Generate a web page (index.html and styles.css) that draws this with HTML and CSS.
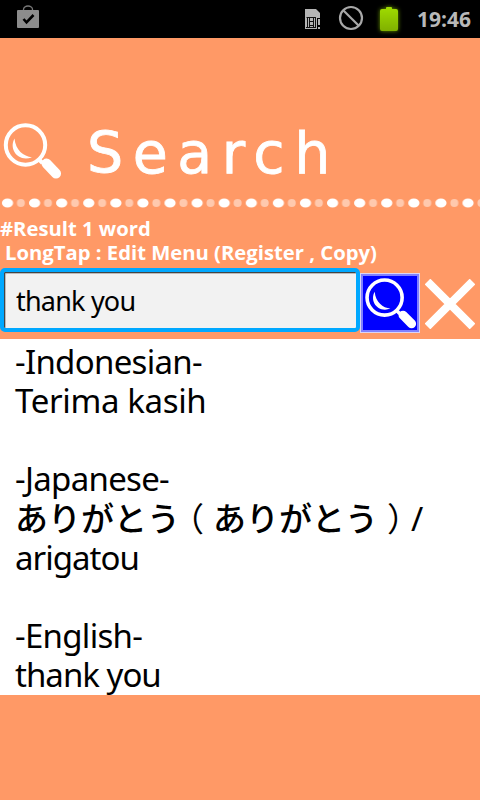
FILE: index.html
```html
<!DOCTYPE html>
<html lang="en">
<head>
  <meta charset="UTF-8">
  <meta name="viewport" content="width=device-width, initial-scale=1.0">
  <title>Search</title>
  <link rel="stylesheet" href="styles.css">
</head>
<body>
  <div class="status-bar">
    <svg class="icon-bag" width="22" height="24" viewBox="0 0 22 24">
      <path d="M6.5 6V4.500a4.500 3.500 0 0 1 9 0V6" fill="none" stroke="#777" stroke-width="1.300"/>
      <rect y="5" width="22" height="18" rx="1" fill="#8c8c8c"/>
      <path d="M6.500 14l3 3.300 7-7.300" fill="none" stroke="#000" stroke-width="2.600"/>
    </svg>
    <svg class="icon-sim" width="16" height="21" viewBox="0 0 16 21">
      <path d="M0 0h11l4 4v5h-3v11H0z" fill="#b4b4b4"/>
      <path d="M1.500 8.500h9.500M2.500 8v11M10.500 8v11M4.500 8v11M8.500 8v11M4.500 12.500h4M4.500 16.500h4M1 18.500h10" fill="none" stroke="#111" stroke-width="1"/>
      <path d="M13 10h2v6h-2zM13 18h2v2h-2z" fill="#b4b4b4"/>
    </svg>
    <svg class="icon-block" width="26" height="26" viewBox="0 0 26 26">
      <g fill="none" stroke="#a8a8a8" stroke-width="2.200">
        <circle cx="13" cy="13" r="11"/>
        <path d="M5.200 5.200l15.600 15.600"/>
      </g>
    </svg>
    <svg class="icon-battery" width="18" height="24" viewBox="0 0 18 24">
      <defs>
        <linearGradient id="charge" x1="0" y1="0" x2="0" y2="1">
          <stop offset="0" stop-color="#a0dc00"/>
          <stop offset="1" stop-color="#80b000"/>
        </linearGradient>
      </defs>
      <path d="M2 2h4V1q0-1 1-1h4q1 0 1 1v1h4q2 0 2 2v18q0 2-2 2H2q-2 0-2-2V4q0-2 2-2z" fill="url(#charge)"/>
    </svg>
    <span class="clock">19:46</span>
  </div>

  <header class="header">
    <div class="title-row">
      <svg class="title-glass" width="60" height="60" viewBox="0 0 60 60">
        <circle cx="23.500" cy="23" r="19.700" fill="none" stroke="#fff" stroke-width="4"/>
        <path d="M12.500 16.500C6.500 27 16 40.500 30 35.200C21.500 34.500 13.500 28 12.500 16.500z" fill="#fff"/>
        <path d="M36.500 37l4 4" stroke="#fff" stroke-width="4"/>
        <path d="M44.500 41.500L54 51.500" stroke="#fff" stroke-width="10" stroke-linecap="round"/>
      </svg>
      <h1 class="title">Search</h1>
    </div>
    <svg class="dots" width="480" height="12">
      <defs>
        <pattern id="bead" width="27.090" height="12" patternUnits="userSpaceOnUse">
          <ellipse cx="7.500" cy="6" rx="5.600" ry="4.600" fill="#fff"/>
          <circle cx="20.900" cy="6" r="4" fill="#ffc9ae"/>
        </pattern>
      </defs>
      <rect width="480" height="12" fill="url(#bead)"/>
    </svg>
  </header>

  <div class="info">
    <p class="info-count">#Result 1 word</p>
    <p class="info-hint">LongTap : Edit Menu (Register , Copy)</p>
  </div>

  <div class="search-row">
    <input class="search-input" type="text" value="thank you">
    <button class="search-btn">
      <svg width="54" height="54" viewBox="0 0 60 60">
        <circle cx="24" cy="24" r="19.500" fill="none" stroke="#fff" stroke-width="4"/>
        <path d="M13 17.500C7 28 16.500 41.500 30.500 36.200C22 35.500 14 29 13 17.500z" fill="#fff"/>
        <path d="M37 38l4 4" stroke="#fff" stroke-width="4"/>
        <path d="M44.500 43.500L54 53" stroke="#fff" stroke-width="10" stroke-linecap="round"/>
      </svg>
    </button>
    <button class="clear-btn">
      <svg width="50" height="50" viewBox="0 0 50 50">
        <path d="M2.500 2.500l45 45M47.500 2.500l-45 45" stroke="#fff" stroke-width="8"/>
      </svg>
    </button>
  </div>

  <div class="result">
    <div class="entry">
      <p class="lang tight">-Indonesian-</p>
      <p class="word loose">Terima kasih</p>
    </div>
    <div class="entry">
      <p class="lang tight">-Japanese-</p>
      <p class="word"><span class="kana">ありがとう<span class="paren-open">（</span>ありがとう<span class="paren-close">）</span></span>/</p>
      <p class="word tighter">arigatou</p>
    </div>
    <div class="entry">
      <p class="lang tight">-English-</p>
      <p class="word tighter">thank you</p>
    </div>
  </div>
</body>
</html>
```
FILE: styles.css
```css
* {
  box-sizing: border-box;
}

body {
  margin: 0;
  height: 800px;
  overflow: hidden;
  background: #ff9966;
  font-family: "Noto Sans", "Open Sans", "Noto Sans CJK JP", sans-serif;
}

p, h1 {
  margin: 0;
  white-space: nowrap;
}

svg {
  display: block;
  flex: none;
}

.status-bar {
  display: flex;
  align-items: flex-start;
  height: 38px;
  padding: 5px 9px 0 17px;
  background: #000;
}

.icon-sim {
  margin: 4px 17px 0 auto;
}

.icon-battery {
  margin: 2px 19px 0 16px;
  filter: drop-shadow(0 0 2px #6a9800);
}

.clock {
  color: #b8b8b8;
  font-family: "Open Sans", sans-serif;
  font-size: 21px;
  font-weight: bold;
  line-height: 29px;
}

.header {
  height: 178px;
  padding-top: 84px;
}

.title-row {
  display: flex;
  height: 75px;
  padding-left: 2px;
}

.title {
  margin-left: 25px;
  color: #fff;
  font-family: "DejaVu Sans", sans-serif;
  font-size: 57px;
  font-weight: normal;
  letter-spacing: 9.5px;
  line-height: 62px;
  -webkit-text-stroke: 0.8px #fff;
}

.info {
  height: 52px;
  color: #fff;
  font-family: "Open Sans", sans-serif;
  font-size: 20.25px;
  font-weight: bold;
  line-height: 24px;
}

.info-hint {
  padding-left: 5px;
}

.search-row {
  display: flex;
  height: 71px;
}

.search-input {
  width: 360px;
  height: 64px;
  padding: 0 12px 0;
  border: 4px solid #00a8ff;
  border-radius: 5px;
  background: #f2f2f2;
  box-shadow: inset 1px 1px 0 #444, inset 2px 2px 0 #bbb;
  color: #000;
  font-family: "Noto Sans", sans-serif;
  font-size: 27px;
  letter-spacing: -0.8px;
  outline: none;
}

.search-btn {
  width: 60px;
  height: 60px;
  margin-top: 5px;
  padding: 1px;
  border: 1px solid #dcd4f4;
  background: #0000ff;
  box-shadow: inset 0 0 0 2px #8080ff;
}

.search-btn svg {
  margin: 1px;
}

.clear-btn {
  margin: 11px 0 0 5px;
  height: 50px;
  padding: 0;
  border: none;
  background: none;
}

.result {
  height: 356px;
  padding: 3px 15px 0;
  background: #fff;
  color: #000;
  font-size: 33px;
  line-height: 39px;
}

.entry {
  margin-bottom: 39px;
}

.tight {
  letter-spacing: -0.7px;
}

.tighter {
  letter-spacing: -0.98px;
}

.loose {
  letter-spacing: -0.35px;
}

.kana {
  font-family: "Noto Sans CJK JP", sans-serif;
  font-weight: 500;
}

/* brackets sit in the middle of their cell */
.paren-open {
  margin: 0 9px 0 -9px;
  font-weight: 400;
}

.paren-close {
  margin: 0 -9px 0 9px;
  font-weight: 400;
}
```
